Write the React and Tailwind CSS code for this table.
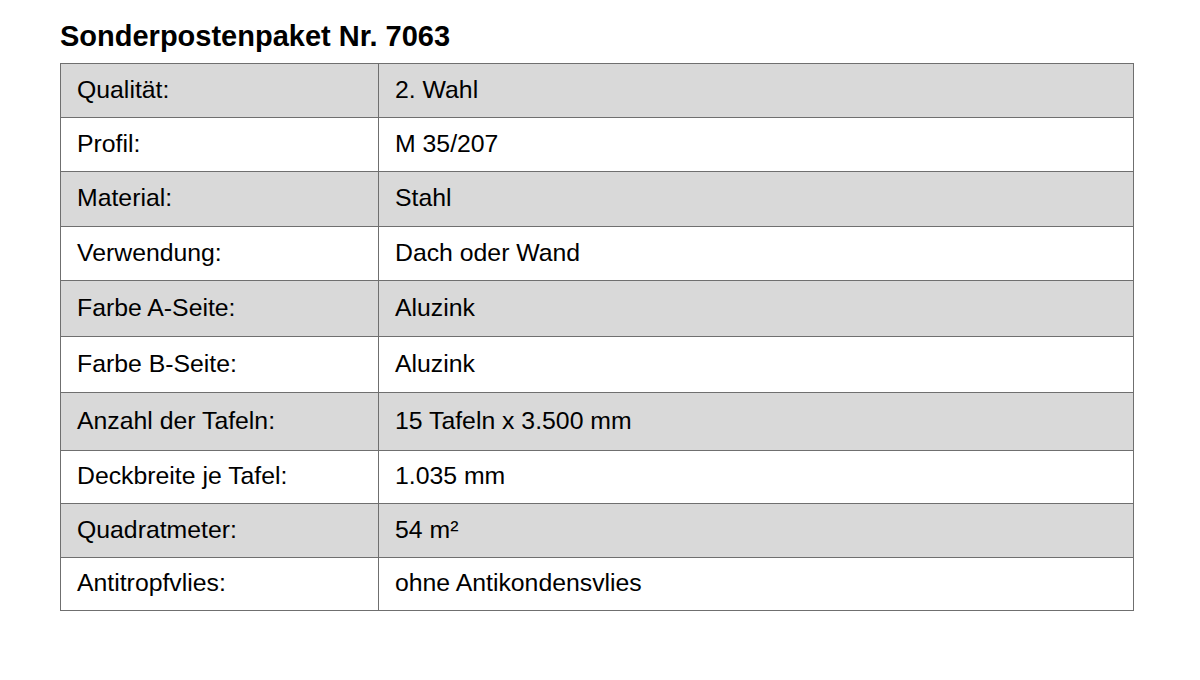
const rows = [
  { label: 'Qualität:', value: '2. Wahl', h: 'h-[54px]', shade: true },
  { label: 'Profil:', value: 'M 35/207', h: 'h-[54px]', shade: false },
  { label: 'Material:', value: 'Stahl', h: 'h-[55px]', shade: true },
  { label: 'Verwendung:', value: 'Dach oder Wand', h: 'h-[54px]', shade: false },
  { label: 'Farbe A-Seite:', value: 'Aluzink', h: 'h-[56px]', shade: true },
  { label: 'Farbe B-Seite:', value: 'Aluzink', h: 'h-[56px]', shade: false },
  { label: 'Anzahl der Tafeln:', value: '15 Tafeln x 3.500 mm', h: 'h-[58px]', shade: true },
  { label: 'Deckbreite je Tafel:', value: '1.035 mm', h: 'h-[53px]', shade: false },
  { label: 'Quadratmeter:', value: '54 m²', h: 'h-[54px]', shade: true },
  { label: 'Antitropfvlies:', value: 'ohne Antikondensvlies', h: 'h-[52px]', shade: false },
];

export default function App() {
  return (
    <div
      className="w-[1200px] h-[680px] bg-white text-black pl-[60px] pt-[19px]"
      style={{ fontFamily: '"Liberation Sans", Arial, sans-serif' }}
    >
      <h1 className="text-[29px] leading-[34px] font-bold">Sonderpostenpaket Nr. 7063</h1>
      <div className="mt-[10px] w-[1074px] border border-[#6f6f6f]">
        {rows.map((r, i) => (
          <div
            key={r.label}
            className={`flex ${r.h} ${r.shade ? 'bg-[#d9d9d9]' : 'bg-white'} ${
              i < rows.length - 1 ? 'border-b border-[#6f6f6f]' : ''
            }`}
          >
            <div className="w-[318px] border-r border-[#6f6f6f] flex items-center pl-[16px] pb-[2px] text-[24.8px]">
              {r.label}
            </div>
            <div className="flex-1 flex items-center pl-[16px] pb-[2px] text-[24.8px]">{r.value}</div>
          </div>
        ))}
      </div>
    </div>
  );
}
